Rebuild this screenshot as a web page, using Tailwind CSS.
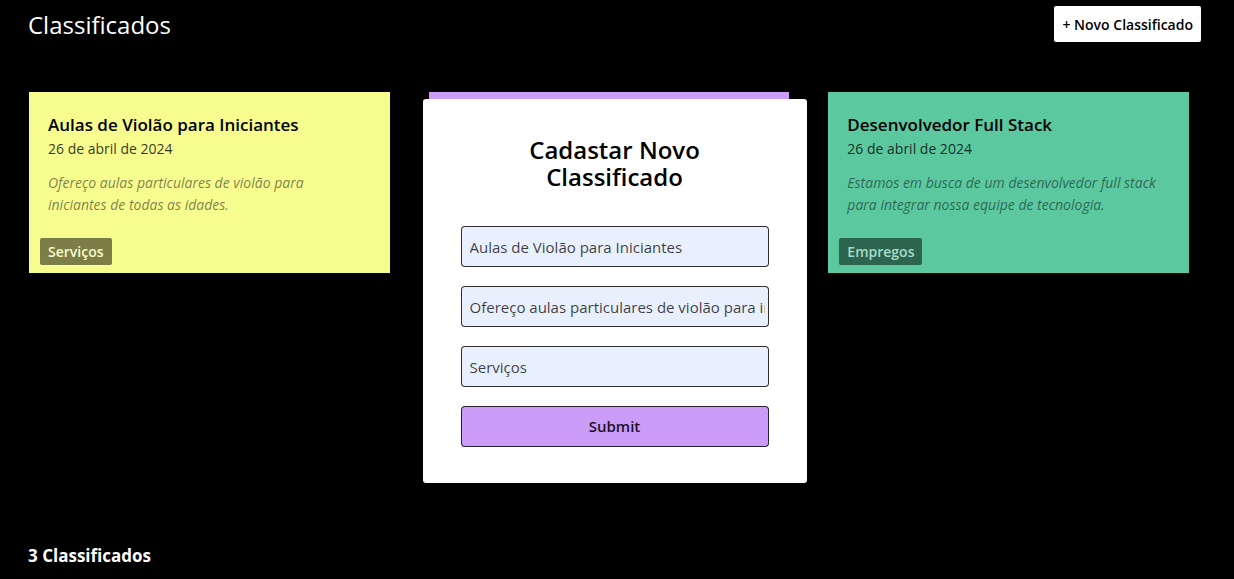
<!DOCTYPE html>
<html lang="pt-BR">
<head>
<meta charset="utf-8">
<meta name="viewport" content="width=device-width, initial-scale=1">
<title>Classificados</title>
<script src="https://cdn.jsdelivr.net/npm/@tailwindcss/browser@4"></script>
</head>
<body class="min-h-screen bg-black font-['Segoe_UI','Open_Sans',sans-serif] text-black">
<div class="flex min-h-screen flex-col">
  <header class="flex items-start justify-between pt-[6px] pr-[33px] pl-[28px]">
    <h1 class="text-[24px] leading-[38px] text-white">Classificados</h1>
    <button type="button" class="h-[36px] rounded-[2px] bg-white px-[8px] text-[14px] font-semibold">+ Novo Classificado</button>
  </header>

  <main class="mt-[48px] grid grid-cols-3 gap-[39px] pr-[45px] pl-[29px]">
    <article class="flex h-[181px] flex-col items-start bg-[#f7fc8f] pt-[20px] pr-[28px] pl-[19px]">
      <h2 class="text-[17px] leading-[26px] font-semibold">Aulas de Violão para Iniciantes</h2>
      <time datetime="2024-04-26" class="text-[14px] leading-[22px] text-black/80">26 de abril de 2024</time>
      <p class="mt-[12px] text-[14px] leading-[22px] text-black/50 italic">Ofereço aulas particulares de violão para iniciantes de todas as idades.</p>
      <span class="mt-[22px] -ml-[8px] rounded-[2px] bg-black/50 px-[8px] text-[14px] leading-[27px] font-semibold text-[#f7fcc8]">Serviços</span>
    </article>
    <article class="h-[181px] bg-[#ca9bf7]"></article>
    <article class="flex h-[181px] flex-col items-start bg-[#5bc8a0] pt-[20px] pr-[28px] pl-[19px]">
      <h2 class="text-[17px] leading-[26px] font-semibold">Desenvolvedor Full Stack</h2>
      <time datetime="2024-04-26" class="text-[14px] leading-[22px] text-black/80">26 de abril de 2024</time>
      <p class="mt-[12px] text-[14px] leading-[22px] text-black/50 italic">Estamos em busca de um desenvolvedor full stack para integrar nossa equipe de tecnologia.</p>
      <span class="mt-[22px] -ml-[8px] rounded-[2px] bg-black/50 px-[8px] text-[14px] leading-[27px] font-semibold text-[#a5dcc8]">Empregos</span>
    </article>
  </main>

  <footer class="mt-auto px-[28px] pb-[10px] text-[17px] leading-[26px] font-bold text-white">3 Classificados</footer>
</div>

<div class="fixed inset-0 flex items-center justify-center pt-[3px] pr-[5px]">
  <form role="dialog" aria-labelledby="form-title" class="flex w-[384px] flex-col gap-[19px] rounded-[3px] bg-white px-[38px] pt-[37px] pb-[36px]">
    <h2 id="form-title" class="mb-[17px] px-[48px] text-center text-[24px] leading-[27px] font-semibold">Cadastar Novo Classificado</h2>
    <input type="text" aria-label="Título" value="Aulas de Violão para Iniciantes" class="h-[41px] w-full rounded-[4px] border border-black/80 bg-[#e8effd] pr-[3px] pl-[8px] text-[15px] text-black/75">
    <input type="text" aria-label="Descrição" value="Ofereço aulas particulares de violão para iniciantes de todas as idades." class="h-[41px] w-full rounded-[4px] border border-black/80 bg-[#e8effd] pr-[3px] pl-[8px] text-[15px] text-black/75">
    <input type="text" aria-label="Categoria" value="Serviços" class="h-[41px] w-full rounded-[4px] border border-black/80 bg-[#e8effd] pr-[3px] pl-[8px] text-[15px] text-black/75">
    <button type="submit" class="h-[41px] w-full rounded-[4px] border border-black/80 bg-[#ca9bf7] text-[15px] font-semibold text-[#1c0f28]">Submit</button>
  </form>
</div>
</body>
</html>
